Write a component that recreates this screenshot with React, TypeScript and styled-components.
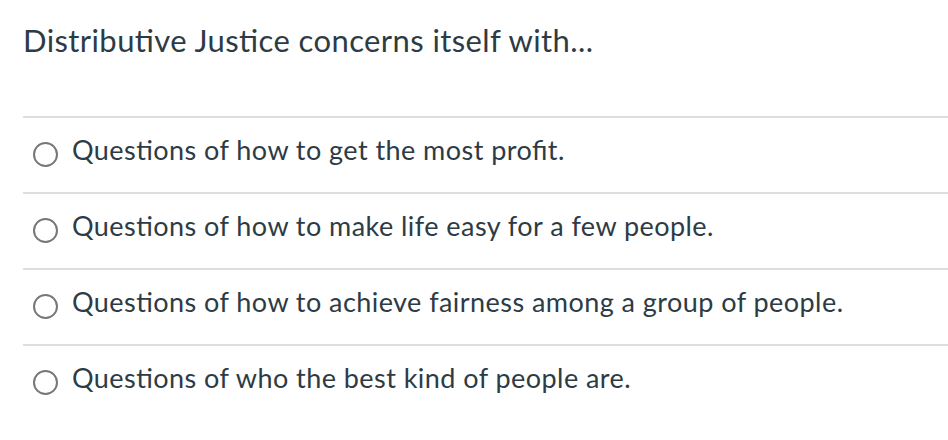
import React from "react";
import styled, { createGlobalStyle } from "styled-components";

const Global = createGlobalStyle`
  html, body { margin: 0; padding: 0; background: #fff; }
  body { font-family: Lato, "Open Sans", sans-serif; color: #2d3b45; }
`;

const Page = styled.div`
  width: 948px;
  height: 440px;
  overflow: hidden;
  padding-left: 23px;
  box-sizing: border-box;
`;

const Title = styled.h1`
  margin: 0;
  height: 116px;
  padding-top: 20px;
  box-sizing: border-box;
  font-size: 31px;
  font-weight: 400;
  line-height: 40px;
  letter-spacing: 0.4px;
  font-feature-settings: "liga" 1;
  color: #2d3b45;
`;

const List = styled.div`
  display: flex;
  flex-direction: column;
`;

const Row = styled.label`
  display: flex;
  align-items: flex-start;
  gap: 14px;
  height: 76px;
  box-sizing: border-box;
  border-top: 2px solid #dddddd;
  padding-left: 10px;
  padding-top: 16px;
`;

const Radio = styled.span`
  width: 25px;
  height: 25px;
  margin-top: 8px;
  border-radius: 50%;
  border: 2px solid #777;
  box-sizing: border-box;
  flex: none;
`;

const Text = styled.span`
  font-size: 27px;
  line-height: 32px;
  letter-spacing: 0.45px;
  font-feature-settings: "liga" 1;
  color: #2d3b45;
`;

const options = [
  "Questions of how to get the most profit.",
  "Questions of how to make life easy for a few people.",
  "Questions of how to achieve fairness among a group of people.",
  "Questions of who the best kind of people are.",
];

export default function App() {
  return (
    <Page>
      <Global />
      <Title>Distributive Justice concerns itself with...</Title>
      <List>
        {options.map((o) => (
          <Row key={o}>
            <Radio />
            <Text>{o}</Text>
          </Row>
        ))}
      </List>
    </Page>
  );
}
